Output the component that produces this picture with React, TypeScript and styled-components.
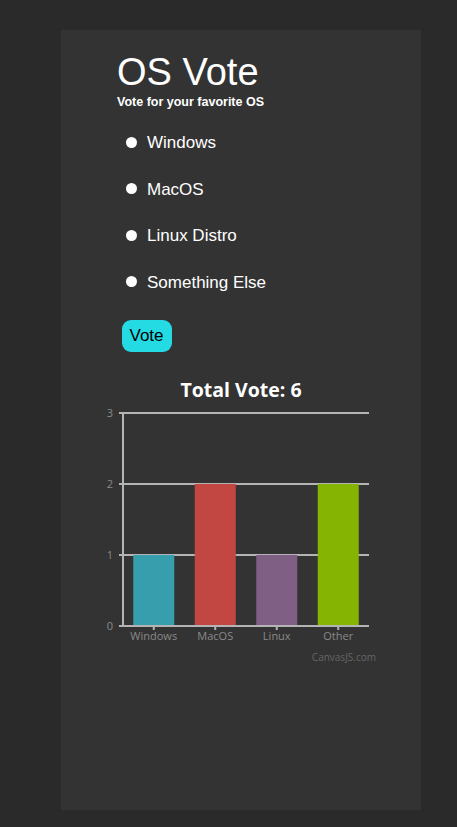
import React from "react";
import styled, { createGlobalStyle } from "styled-components";

const Global = createGlobalStyle`
  html, body { margin: 0; padding: 0; background: #2a2a2a; }
  body { font-family: "Liberation Sans", Arial, sans-serif; }
`;

const Page = styled.div`
  padding: 30px 36px 17px 61px;
`;

const Panel = styled.main`
  width: 360px;
  height: 780px;
  background: #333333;
  box-sizing: border-box;
  padding-top: 19px;
  display: flex;
  flex-direction: column;
`;

const Content = styled.section`
  margin-left: 56px;
  color: #ffffff;
`;

const Title = styled.h1`
  margin: 0;
  font-size: 38px;
  line-height: 46px;
  font-weight: 400;
`;

const Subtitle = styled.p`
  margin: 0;
  font-size: 12.5px;
  line-height: 14px;
  font-weight: 700;
`;

const Options = styled.div`
  margin-top: 24px;
  display: flex;
  flex-direction: column;
  gap: 26.67px;
`;

const Option = styled.label`
  display: flex;
  align-items: center;
  height: 20px;
  padding-left: 9px;
  font-size: 17px;
  line-height: 20px;
  cursor: pointer;
`;

const Dot = styled.span`
  width: 11px;
  height: 11px;
  border-radius: 50%;
  background: #ffffff;
  margin-right: 10px;
  margin-top: -2px;
  flex: none;
`;

const VoteButton = styled.button`
  margin: 26.6px 0 0 4.5px;
  height: 32px;
  padding: 0 8px;
  border: none;
  border-radius: 9px;
  background: #24dbe4;
  color: #000;
  font-family: "Liberation Sans", Arial, sans-serif;
  font-size: 17px;
  line-height: 20px;
  cursor: pointer;
`;

const ChartWrap = styled.div`
  margin-top: 20px;
  margin-left: 30px;
  width: 300px;
  height: 300px;
`;

const ChartSvg = styled.svg`
  display: block;
  font-family: "Open Sans", sans-serif;
`;

const options = ["Windows", "MacOS", "Linux Distro", "Something Else"];

const data = [
  { label: "Windows", y: 1, color: "#369EAD" },
  { label: "MacOS", y: 2, color: "#C24642" },
  { label: "Linux", y: 1, color: "#7F6084" },
  { label: "Other", y: 2, color: "#86B402" },
];

const plotLeft = 32;
const plotRight = 278;
const plotBottom = 254;
const unit = 71;
const gridColor = "#b4b4b4";

function Chart() {
  const step = (plotRight - plotLeft) / data.length;
  return (
    <ChartSvg width={300} height={300} viewBox="0 0 300 300">
      <text x={150} y={25} textAnchor="middle" fill="#ffffff" fontSize={19.5} fontWeight={700}>
        Total Vote: 6
      </text>
      {[0, 1, 2, 3].map((v) => {
        const y = plotBottom - v * unit;
        return (
          <g key={v}>
            <line x1={28} x2={plotRight} y1={y} y2={y} stroke={gridColor} strokeWidth={2} />
            <text x={22} y={y + 4} textAnchor="end" fill="#8a8a8a" fontSize={11}>
              {v}
            </text>
          </g>
        );
      })}
      {data.map((d, i) => {
        const cx = plotLeft + step * (i + 0.5);
        const top = plotBottom - d.y * unit;
        return (
          <g key={d.label}>
            <rect x={cx - 20.5} y={top} width={41} height={plotBottom - top - 1} fill={d.color} />
            <line x1={cx} x2={cx} y1={plotBottom} y2={plotBottom + 4} stroke={gridColor} strokeWidth={2} />
            <text x={cx} y={268} textAnchor="middle" fill="#8a8a8a" fontSize={11}>
              {d.label}
            </text>
          </g>
        );
      })}
      <line x1={plotLeft} x2={plotLeft} y1={40} y2={plotBottom + 1} stroke={gridColor} strokeWidth={2} />
      <text x={285} y={289} textAnchor="end" fill="#666666" fontSize={10}>
        CanvasJS.com
      </text>
    </ChartSvg>
  );
}

export default function App() {
  return (
    <>
      <Global />
      <Page>
        <Panel>
          <Content>
            <Title>OS Vote</Title>
            <Subtitle>Vote for your favorite OS</Subtitle>
            <Options>
              {options.map((o) => (
                <Option key={o}>
                  <Dot />
                  {o}
                </Option>
              ))}
            </Options>
            <VoteButton>Vote</VoteButton>
          </Content>
          <ChartWrap>
            <Chart />
          </ChartWrap>
        </Panel>
      </Page>
    </>
  );
}
